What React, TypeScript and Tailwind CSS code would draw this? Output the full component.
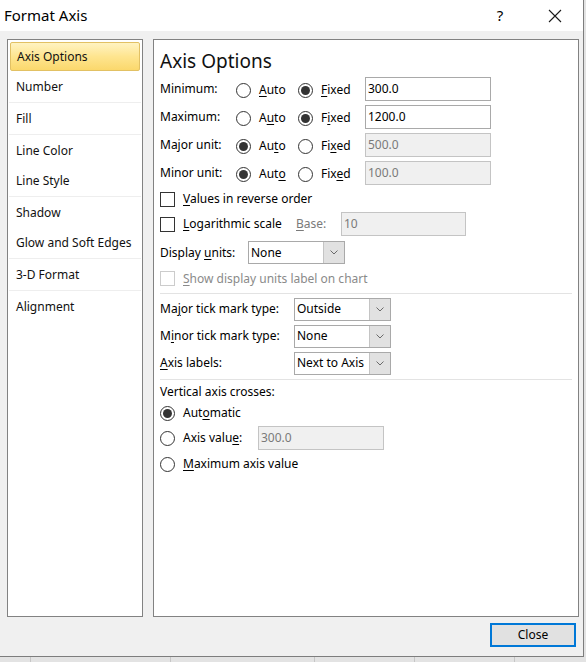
import React from 'react';

const FONT = { fontFamily: '"Noto Sans", "Segoe UI", sans-serif' };

function Acc({ text, k }: { text: string; k: number }) {
  return (
    <span>
      {text.slice(0, k)}
      <span className="underline underline-offset-2">{text[k]}</span>
      {text.slice(k + 1)}
    </span>
  );
}

function Radio({ checked = false }: { checked?: boolean }) {
  return (
    <span className="w-[15px] h-[15px] rounded-full border border-[#333333] bg-white flex items-center justify-center shrink-0">
      {checked && <span className="w-[9px] h-[9px] rounded-full bg-[#333333]" />}
    </span>
  );
}

function Check({ disabled = false }: { disabled?: boolean }) {
  return (
    <span
      className={
        'w-[15px] h-[15px] border bg-white shrink-0 ' +
        (disabled ? 'border-[#cccccc]' : 'border-[#333333]')
      }
    />
  );
}

function TextBox({ value, disabled = false, w }: { value: string; disabled?: boolean; w: string }) {
  return (
    <div
      className={
        'h-[24px] border flex items-center px-[2px] ' +
        w +
        (disabled
          ? ' bg-[#f0f0f0] border-[#c4c4c4] text-[#7a7a7a]'
          : ' bg-white border-[#a9a9a9] text-black')
      }
    >
      {value}
    </div>
  );
}

function Select({ value, w }: { value: string; w: string }) {
  return (
    <div className={'h-[23px] border border-[#a9a9a9] bg-white flex items-stretch ' + w}>
      <div className="flex-1 flex items-center px-[2px] whitespace-nowrap overflow-hidden">{value}</div>
      <div className="w-[21px] bg-[#e1e1e1] border-l border-[#c4c4c4] flex items-center justify-center">
        <svg width="8" height="5" viewBox="0 0 8 5" fill="none">
          <path d="M0.5 0.5 L4 4 L7.5 0.5" stroke="#6a6a6a" strokeWidth="1" />
        </svg>
      </div>
    </div>
  );
}

const NAV = [
  { label: 'Axis Options', h: 'h-[29px]', sep: false, selected: true },
  { label: 'Number', h: 'h-[30px]', sep: true },
  { label: 'Fill', h: 'h-[31px]', sep: true },
  { label: 'Line Color', h: 'h-[31px]', sep: false },
  { label: 'Line Style', h: 'h-[30px]', sep: true },
  { label: 'Shadow', h: 'h-[31px]', sep: false },
  { label: 'Glow and Soft Edges', h: 'h-[30px]', sep: true },
  { label: '3-D Format', h: 'h-[31px]', sep: true },
  { label: 'Alignment', h: 'h-[31px]', sep: false },
];

const UNIT_ROWS = [
  { label: 'Minimum:', auto: false, ka: 0, kf: 0, value: '300.0' },
  { label: 'Maximum:', auto: false, ka: 1, kf: 1, value: '1200.0' },
  { label: 'Major unit:', auto: true, ka: 2, kf: 2, value: '500.0' },
  { label: 'Minor unit:', auto: true, ka: 3, kf: 3, value: '100.0' },
];

export default function App() {
  return (
    <div className="w-[586px] h-[662px] bg-[#e3e3e3] flex flex-col overflow-hidden" style={FONT}>
      <div className="w-[584px] h-[657px] shrink-0 flex flex-col border-r border-b border-[#7d7d7d] text-[12px] text-black">
        {/* title bar */}
        <div className="h-[31px] bg-white flex items-center shrink-0">
          <div className="pl-[4px] text-[15px] text-black flex-1">Format Axis</div>
          <div className="w-[20px] text-center text-[15px] mr-[38px]">?</div>
          <div className="w-[14px] mr-[21px] flex items-center">
            <svg width="14" height="14" viewBox="0 0 14 14">
              <path d="M1 1 L13 13 M13 1 L1 13" stroke="#1a1a1a" strokeWidth="1.1" />
            </svg>
          </div>
        </div>

        {/* body */}
        <div className="flex-1 bg-[#f0f0f0] flex flex-col">
          <div className="flex pt-[8px] pl-[7px]">
            {/* nav list */}
            <div className="w-[136px] h-[578px] bg-white border border-[#828282] p-[2px] flex flex-col">
              {NAV.map((n, i) => (
                <div key={n.label} className={'flex flex-col shrink-0 ' + (i === 0 ? 'mb-[1px]' : '')}>
                  <div
                    className={
                      'flex items-center pl-[6px] text-[#111111] ' +
                      n.h +
                      (n.selected
                        ? ' rounded-[2px] border border-[#e2c164] bg-gradient-to-b from-[#fff3c2] via-[#fee58f] to-[#fbd86c] pl-[5px]'
                        : '')
                    }
                  >
                    {n.label}
                  </div>
                  {n.sep && <div className="h-[1px] bg-[#eeeeee] mx-[-1px]" />}
                </div>
              ))}
            </div>

            {/* options panel */}
            <div className="ml-[10px] w-[426px] h-[578px] bg-white border border-[#828282] pl-[6px] pr-[5px] pt-[7px] flex flex-col">
              <div className="h-[28px] leading-[28px] text-[19px] text-[#111111]">Axis Options</div>

              {UNIT_ROWS.map(r => (
                <div key={r.label} className="h-[28px] flex items-center">
                  <div className="w-[76px]">{r.label}</div>
                  <div className="w-[62px] flex items-center gap-[8px] mt-[2px]">
                    <Radio checked={r.auto} />
                    <Acc text="Auto" k={r.ka} />
                  </div>
                  <div className="w-[67px] flex items-center gap-[8px] mt-[2px]">
                    <Radio checked={!r.auto} />
                    <Acc text="Fixed" k={r.kf} />
                  </div>
                  <TextBox value={r.value} disabled={r.auto} w="w-[126px]" />
                </div>
              ))}

              <div className="h-[24px] flex items-center gap-[8px]">
                <Check />
                <Acc text="Values in reverse order" k={0} />
              </div>
              <div className="h-[26px] flex items-center">
                <Check />
                <span className="ml-[8px] w-[113px]">
                  <Acc text="Logarithmic scale" k={0} />
                </span>
                <span className="w-[45px] text-[#7a7a7a]">
                  <Acc text="Base:" k={0} />
                </span>
                <TextBox value="10" disabled w="w-[125px]" />
              </div>
              <div className="h-[31px] flex items-center">
                <span className="w-[88px]">
                  <Acc text="Display units:" k={8} />
                </span>
                <Select value="None" w="w-[97px]" />
              </div>
              <div className="h-[21px] flex items-center gap-[8px] text-[#8a8a8a]">
                <Check disabled />
                <Acc text="Show display units label on chart" k={0} />
              </div>

              <div className="mt-[4px] h-[1px] bg-[#e3e3e3] mr-[1px]" />

              <div className="pt-[3px] flex flex-col gap-[3px]">
                {[
                  { label: 'Major tick mark type:', k: 2, v: 'Outside' },
                  { label: 'Minor tick mark type:', k: 1, v: 'None' },
                  { label: 'Axis labels:', k: 0, v: 'Next to Axis' },
                ].map(r => (
                  <div key={r.label} className="h-[24px] flex items-center">
                    <span className="w-[134px]">
                      <Acc text={r.label} k={r.k} />
                    </span>
                    <Select value={r.v} w="w-[97px]" />
                  </div>
                ))}
              </div>

              <div className="mt-[4px] h-[1px] bg-[#e3e3e3] mr-[1px]" />

              <div className="mt-[1px] h-[22px] flex items-center">Vertical axis crosses:</div>
              <div className="h-[20px] flex items-center gap-[8px]">
                <Radio checked />
                <Acc text="Automatic" k={3} />
              </div>
              <div className="mt-[2px] h-[26px] flex items-center">
                <Radio />
                <span className="ml-[8px] w-[75px]">
                  <Acc text="Axis value:" k={9} />
                </span>
                <TextBox value="300.0" disabled w="w-[126px]" />
              </div>
              <div className="h-[26px] flex items-center gap-[8px]">
                <Radio />
                <Acc text="Maximum axis value" k={0} />
              </div>
            </div>
          </div>

          {/* footer */}
          <div className="flex justify-end pr-[7px] pt-[6px]">
            <div className="w-[86px] h-[24px] border-2 border-[#0078d7] bg-[#e1e1e1] flex items-center justify-center text-[12px]">
              Close
            </div>
          </div>
        </div>
      </div>

      {/* sheet behind the dialog */}
      <div className="flex-1 flex">
        <div className="w-[31px] border-r border-[#c6c6c6]" />
        <div className="w-[140px] border-r border-[#c6c6c6]" />
        <div className="w-[144px] border-r border-[#c6c6c6]" />
        <div className="w-[100px] border-r border-[#c6c6c6]" />
        <div className="w-[100px] border-r border-[#c6c6c6]" />
      </div>
    </div>
  );
}
